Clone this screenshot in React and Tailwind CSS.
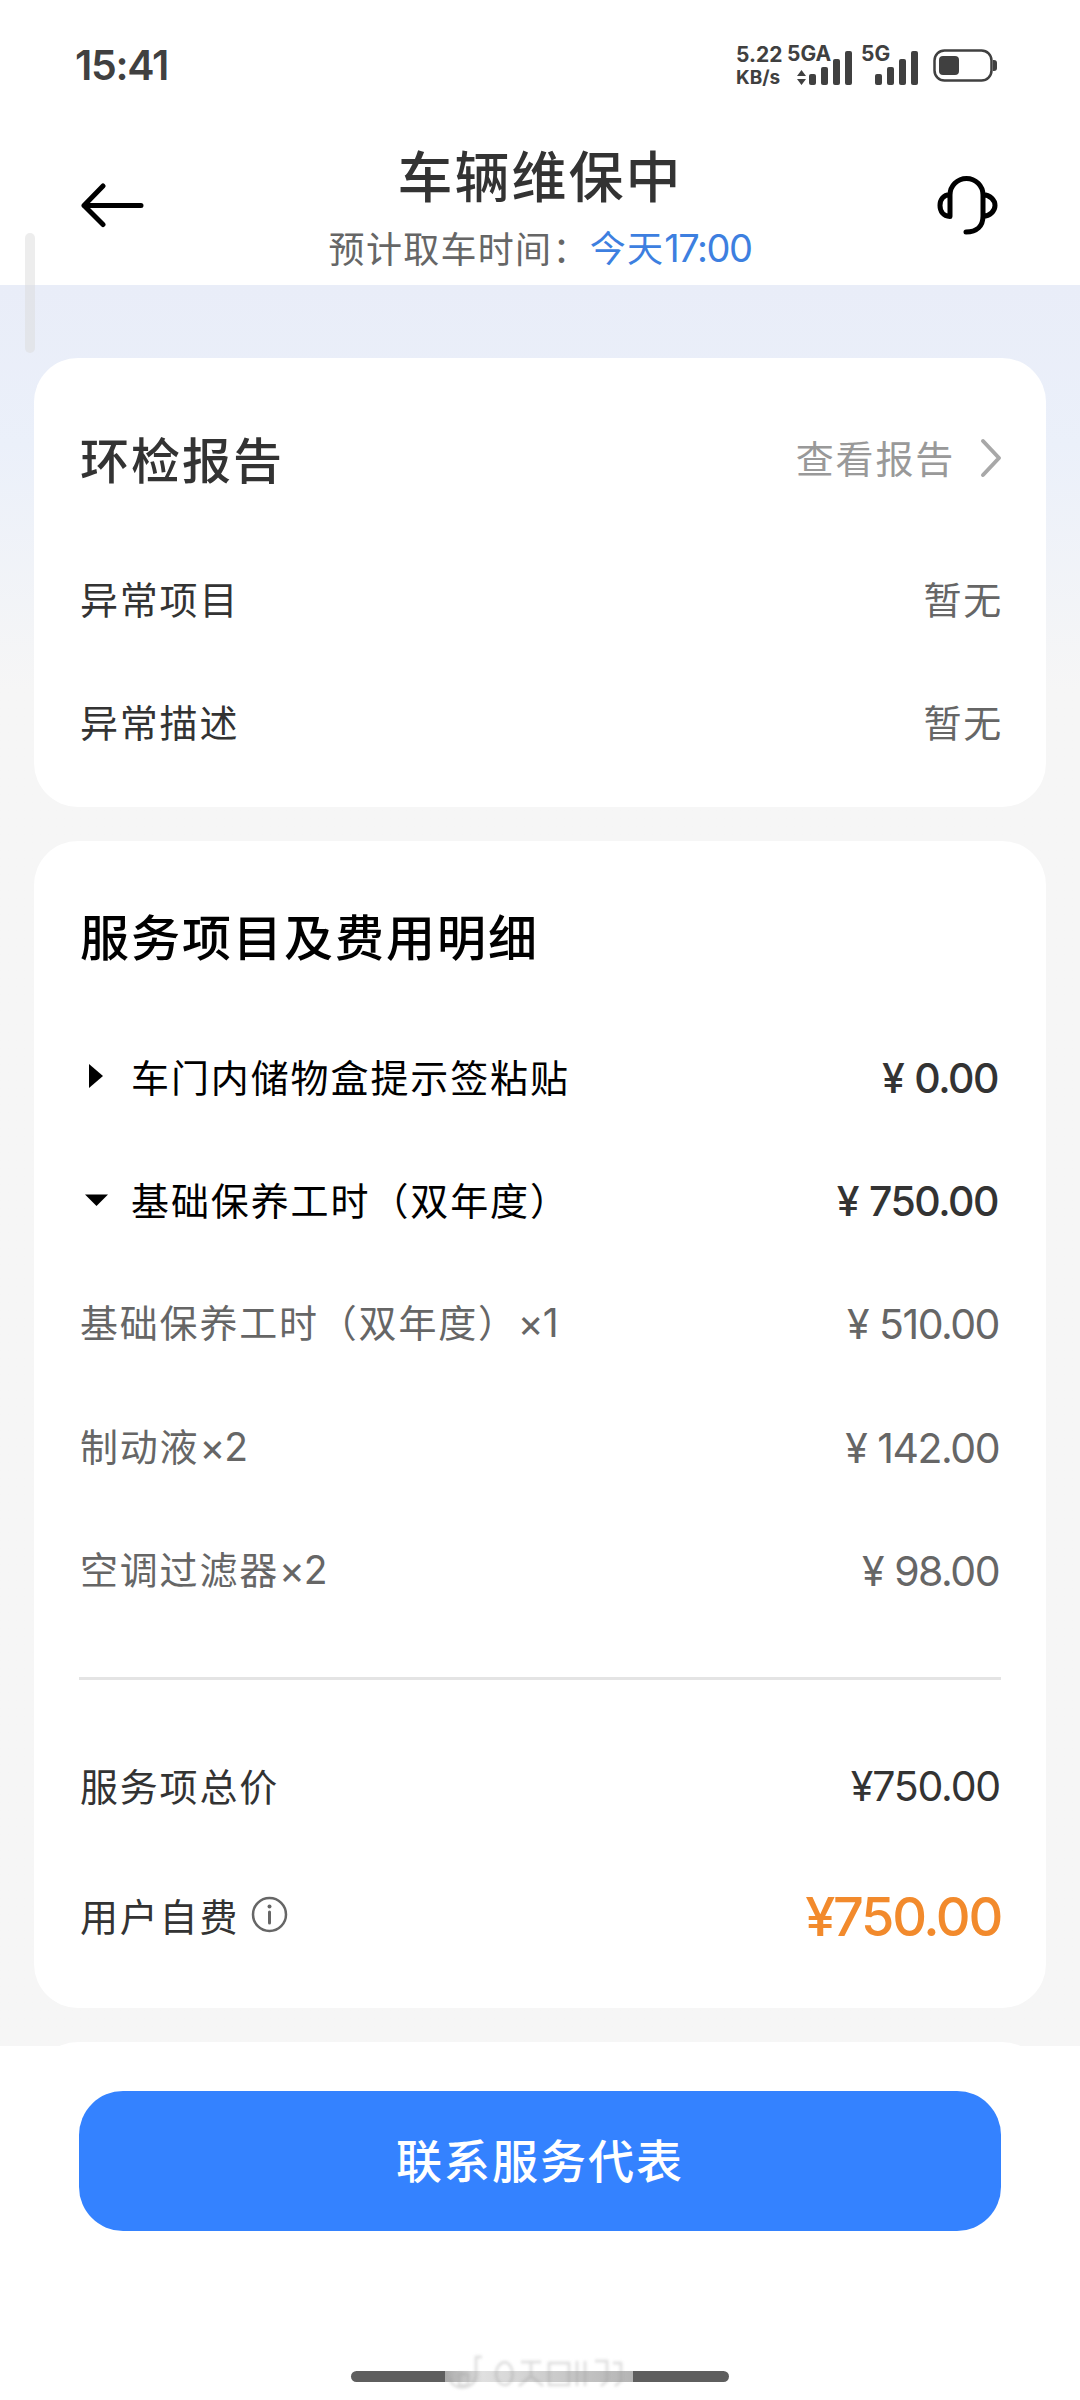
import React from 'react';

const reportRows = [
  { label: '异常项目', value: '暂无' },
  { label: '异常描述', value: '暂无' },
];

const feeGroups = [
  { name: '车门内储物盒提示签粘贴', price: '0.00', open: false, items: [] },
  {
    name: '基础保养工时（双年度）',
    price: '750.00',
    open: true,
    items: [
      { name: '基础保养工时（双年度）', count: 1, price: '510.00' },
      { name: '制动液', count: 2, price: '142.00' },
      { name: '空调过滤器', count: 2, price: '98.00' },
    ],
  },
];

const SignalBars = () => (
  <svg width="44" height="36" viewBox="0 0 44 36" fill="#404040">
    <rect x="0" y="24" width="7" height="11" rx="2" />
    <rect x="12" y="17" width="7" height="18" rx="2" />
    <rect x="24" y="9" width="7" height="26" rx="2" />
    <rect x="36" y="1" width="7" height="34" rx="2" />
  </svg>
);

const StatusBar = () => (
  <div className="flex h-[131px] items-center justify-between pl-[75px] pr-[83px] font-[Inter] text-[#404040]">
    <div className="text-[41px] font-semibold leading-none tracking-[-1.3px]">15:41</div>
    <div className="flex items-center">
      <div className="w-[51px] text-[21px] font-bold leading-[23px]">
        <div>5.22</div>
        <div className="text-[19px]">KB/s</div>
      </div>
      <div className="relative flex h-[40px] w-[66px] items-end justify-end">
        <span className="absolute left-0 top-[-4px] text-[21px] font-bold leading-[23px]">5GA</span>
        <svg className="absolute bottom-[1px] left-[10px]" width="9" height="15" viewBox="0 0 9 15" fill="#404040">
          <path d="M4.5 0L9 6H0zM4.5 15L0 9h9z" />
        </svg>
        <SignalBars />
      </div>
      <div className="relative ml-2 flex h-[40px] w-[58px] items-end justify-end">
        <span className="absolute left-0 top-[-4px] text-[21px] font-bold leading-[23px]">5G</span>
        <SignalBars />
      </div>
      <svg className="ml-[14px]" width="64" height="34" viewBox="0 0 64 34" fill="none">
        <rect x="1.5" y="1.5" width="57" height="30" rx="10" stroke="#404040" strokeWidth="2.5" />
        <rect x="6" y="7" width="20" height="19" rx="4" fill="#404040" />
        <path d="M60 11h1a3 3 0 0 1 3 3v5a3 3 0 0 1-3 3h-1z" fill="#404040" />
      </svg>
    </div>
  </div>
);

const Header = () => (
  <div className="flex h-[154px] items-start justify-between px-20">
    <svg className="mt-[51px]" width="64" height="46" viewBox="0 0 64 46" fill="none" stroke="#000" strokeWidth="5" strokeLinecap="round" strokeLinejoin="round">
      <path d="M61 23.500H4M23 4L4 23.500l19 19" />
    </svg>
    <div className="flex flex-col items-center">
      <h1 className="mt-[14px] text-[55px] font-medium leading-[56px] tracking-[2px] text-[#333]">车辆维保中</h1>
      <div className="mt-[24px] flex items-center text-[36px] leading-[42px] tracking-[1.3px] text-[#666]">
        <span>预计取车时间：</span>
        <span className="text-[#3d7fe0]">今天<span className="font-[Inter] text-[38px] tracking-[-1.5px]">17:00</span></span>
      </div>
    </div>
    <svg className="mt-[44px]" width="64" height="64" viewBox="0 0 64 64" fill="none" stroke="#000" strokeWidth="5" strokeLinecap="round" strokeLinejoin="round">
      <path d="M14 41V20a16.500 16.500 0 0 1 33 0v21c0 10-6 16-17 16M14 19.500C7 20 4 25 4 30.500S7 41 14 41.500M47 19.500c7 .5 12 5.500 12 11s-5 10.500-12 11" />
    </svg>
  </div>
);

const Price = ({ value, className }) => (
  <span className={className}>
    ¥<span className="ml-[11px]">{value}</span>
  </span>
);

const App = () => {
  return (
    <div className="flex h-[2400px] w-[1080px] flex-col overflow-hidden bg-white font-['Noto_Sans_CJK_SC',sans-serif]">
      <StatusBar />
      <Header />

      <main className="relative flex h-[1761px] flex-col gap-[34px] overflow-hidden bg-[#f6f6f6] bg-linear-to-b from-[#e9edf8] from-0% via-[#ebf0fa] via-9% to-[#f6f6f6] to-23% px-[34px] pt-[73px]">
        {/* Inspection report */}
        <section className="h-[449px] shrink-0 rounded-[44px] bg-white px-[46px] pt-[49px]">
          <div className="flex h-[100px] items-center justify-between">
            <h2 className="text-[49px] font-medium leading-none tracking-[2px] text-[#333]">环检报告</h2>
            <div className="flex items-center text-[38px] leading-none tracking-[1.8px] text-[#999]">
              查看报告
              <svg className="ml-[25px] mr-[-2px] mt-[2px]" width="22" height="40" viewBox="0 0 22 40" fill="none" stroke="#a8a8a8" strokeWidth="4" strokeLinecap="round" strokeLinejoin="round">
                <path d="M3 3l16 17L3 37" />
              </svg>
            </div>
          </div>
          <div className="mt-[29px]">
            {reportRows.map((row) => (
              <div key={row.label} className="flex h-[123px] items-center justify-between text-[38px] leading-none tracking-[1.8px]">
                <span className="text-[#333]">{row.label}</span>
                <span className="mr-[-3px] text-[#666]">{row.value}</span>
              </div>
            ))}
          </div>
        </section>

        {/* Services and fees */}
        <section className="h-[1167px] shrink-0 rounded-[44px] bg-white px-[45px] pt-[43px]">
          <h2 className="flex h-[100px] items-center pl-px text-[49px] font-medium leading-none tracking-[2px] text-black">服务项目及费用明细</h2>
          <div className="mt-[30px] pl-px">
            {feeGroups.map((group) => (
              <div key={group.name}>
                <div className="flex h-[123.4px] items-center justify-between leading-none">
                  <div className="flex items-center text-[38px] tracking-[1.9px] text-black">
                    <svg className="mr-[19px]" width="32" height="32" viewBox="0 0 32 32" fill="#000">
                      {group.open ? <path d="M5 11.500h23L16.500 23z" /> : <path d="M9 4v24l14-12z" />}
                    </svg>
                    {group.name}
                  </div>
                  <Price value={group.price} className="mr-[3px] pt-[5px] font-[Inter] text-[41px] font-medium tracking-[-1.5px] text-[#333]" />
                </div>
                {group.items.map((item) => (
                  <div key={item.name} className="flex h-[123.4px] items-center justify-between leading-none text-[#666]">
                    <span className="text-[38px] tracking-[1.8px]">
                      {item.name}
                      <span className="font-[Inter] text-[39px] tracking-[-1px]">×{item.count}</span>
                    </span>
                    <Price value={item.price} className="mr-[2px] pt-[5px] font-[Inter] text-[41px] tracking-[-1.5px]" />
                  </div>
                ))}
              </div>
            ))}
          </div>
          <div className="mt-[46px] h-[3px] bg-[#e4e4e4]" />
          <div className="mt-[40px] flex h-[130px] items-center justify-between pl-px leading-none text-[#333]">
            <span className="text-[38px] tracking-[1.8px]">服务项总价</span>
            <span className="mr-px pt-[4px] font-[Inter] text-[41px] tracking-[-1.2px]">¥750.00</span>
          </div>
          <div className="flex h-[130px] items-center justify-between pl-px leading-none">
            <div className="flex items-center text-[38px] tracking-[1.8px] text-[#333]">
              用户自费
              <svg className="ml-[12px]" width="37" height="37" viewBox="0 0 37 37" fill="none" stroke="#666" strokeWidth="2.500">
                <circle cx="18.500" cy="18.500" r="16.500" />
                <path d="M18.500 16v11" strokeWidth="3" strokeLinecap="round" />
                <circle cx="18.500" cy="10.500" r="2" fill="#666" stroke="none" />
              </svg>
            </div>
            <span className="pt-[4px] font-[Inter] text-[54px] font-medium tracking-[-2.3px] text-[#f28a2c]">¥750.00</span>
          </div>
        </section>

        {/* Next card, mostly hidden under the footer */}
        <section className="h-[200px] shrink-0 rounded-[44px] bg-white" />
      </main>

      <footer className="flex flex-1 flex-col items-center bg-white px-[79px] pt-[45px]">
        <button className="h-[140px] w-full rounded-[44px] bg-[#3482ff] pb-[7px] text-[46px] font-medium leading-none tracking-[2px] text-white">
          联系服务代表
        </button>
        <div className="relative mt-[140px] h-[11px] w-[378px] rounded-full bg-[#5e5e5e]">
          <div className="absolute left-[94px] top-0 h-[11px] w-[188px] bg-linear-to-r from-[#aaa] via-[#e0e0e0] via-20% to-[#b5b5b5]" />
          {/* Faded badge over the home indicator */}
          <svg className="absolute left-[94px] top-[-18px] blur-[1.5px]" width="188" height="42" viewBox="0 0 188 42" fill="none" stroke="#999" strokeOpacity="0.35" strokeWidth="2.5">
            <path d="M5 25c0 12 24 14 26-2V4h6M14 21h9v11h-9z" />
            <path d="M60 9c-12 2-12 22 0 23 10 0 10-21 0-23M76 9h20M86 9v14l-12 10M86 23l12 10M104 10h20v22h-20zM132 8v25M140 8v25M150 8h12v20l-6 5M168 10h8v18l-6 5" />
          </svg>
        </div>
      </footer>

      {/* Scroll handle on the left edge */}
      <div className="absolute left-[25px] top-[233px] h-[120px] w-[10px] rounded-full bg-[#dcdcdc]/50" />
    </div>
  );
};

export default App;
